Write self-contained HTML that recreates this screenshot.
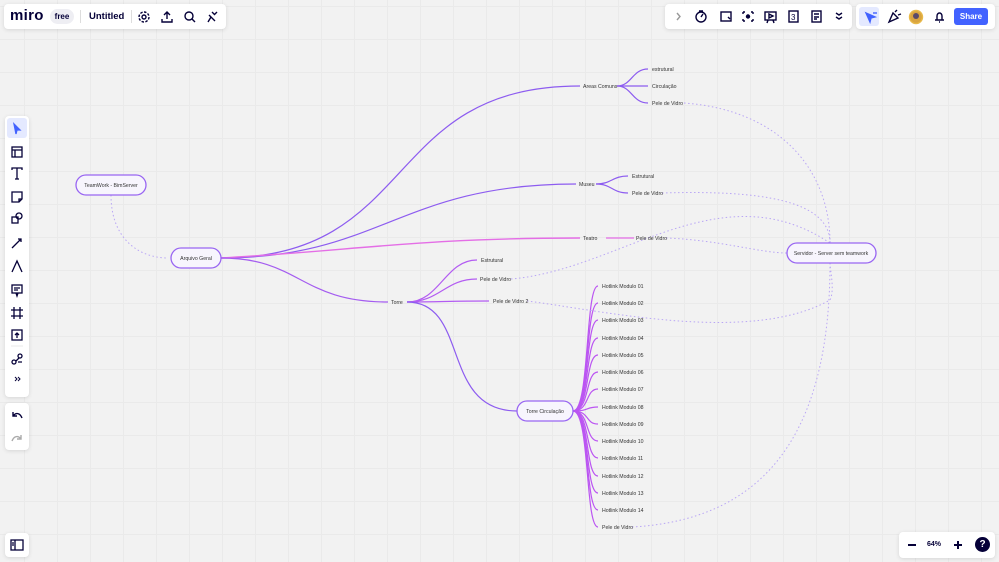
<!DOCTYPE html>
<html><head><meta charset="utf-8"><style>
*{margin:0;padding:0;box-sizing:border-box}
body{width:999px;height:562px;overflow:hidden;position:relative;font-family:"Liberation Sans",sans-serif;
background-color:#f2f2f2;
background-image:linear-gradient(#eaeaea 1px,transparent 1px),linear-gradient(90deg,#eaeaea 1px,transparent 1px);
background-size:33px 33px;background-position:24px 6px}
.panel{position:absolute;background:#fff;border-radius:4px;box-shadow:0 1px 4px rgba(0,0,0,.12)}
svg.c{position:absolute;left:0;top:0}
.ic{position:absolute}
</style></head><body>
<svg class="c" width="999" height="562" font-family="Liberation Sans, sans-serif" font-size="5.2" fill="#333">
<g fill="none" stroke-width="1.2">
<path d="M221,258 C420,258 380,86 580,86" stroke="#8d5cf0"/>
<path d="M221,258 C380,258 400,184 576,184" stroke="#8d5cf0"/>
<path d="M221,258 C360,250 420,238 580,238" stroke="#e46ee6" stroke-width="1.4"/>
<path d="M221,258 C300,258 300,302 388,302" stroke="#a45cf0"/>
<path d="M606,238 H634" stroke="#e46ee6"/>
<path d="M617,86 C632,86 632,69 648,69" stroke="#8d5cf0"/>
<path d="M617,86 H648" stroke="#8d5cf0"/>
<path d="M617,86 C632,86 632,103 648,103" stroke="#8d5cf0"/>
<path d="M596,184 C612,184 612,176 628,176" stroke="#8d5cf0"/>
<path d="M596,184 C612,184 612,193 628,193" stroke="#8d5cf0"/>
<g stroke="#b35cf2">
<path d="M407,302 C440,302 445,260 477,260"/>
<path d="M407,302 C440,302 445,279 477,279"/>
<path d="M407,302 C440,302 450,301 489,301"/>
</g>
<path d="M407,302 C470,302 440,411 517,411" stroke="#8d5cf0"/>
<g stroke="#bb55f2">
<path d="M573,411 C590,411 585,286 598,286"/>
<path d="M573,411 C590,411 585,303 598,303"/>
<path d="M573,411 C590,411 585,320 598,320"/>
<path d="M573,411 C590,411 585,338 598,338"/>
<path d="M573,411 C590,411 585,355 598,355"/>
<path d="M573,411 C590,411 585,372 598,372"/>
<path d="M573,411 C590,411 585,389 598,389"/>
<path d="M573,411 C590,411 585,407 598,407"/>
<path d="M573,411 C590,411 585,424 598,424"/>
<path d="M573,411 C590,411 585,441 598,441"/>
<path d="M573,411 C590,411 585,458 598,458"/>
<path d="M573,411 C590,411 585,476 598,476"/>
<path d="M573,411 C590,411 585,493 598,493"/>
<path d="M573,411 C590,411 585,510 598,510"/>
<path d="M573,411 C590,411 585,527 598,527"/>
</g>
<g stroke="#b9a6f5" stroke-dasharray="1.5,2.5" stroke-width="1">
<path d="M111,195 C111,240 140,258 168,258"/>
<path d="M684,103 C780,110 830,170 830,243"/>
<path d="M662,193 C760,190 830,200 830,243"/>
<path d="M666,238 C720,240 760,253 787,253"/>
<path d="M511,279 C620,270 720,170 830,243"/>
<path d="M527,301 C600,310 750,345 830,300 C835,290 830,270 830,263"/>
<path d="M632,527 C760,520 830,440 830,263"/>
</g>
<g stroke="#9966f2" stroke-width="1.3" fill="#f7f5fd">
<rect x="76" y="175" width="70" height="20" rx="10"/>
<rect x="171" y="248" width="50" height="20" rx="10"/>
<rect x="787" y="243" width="89" height="20" rx="10"/>
<rect x="517" y="401" width="56" height="20" rx="10"/>
</g>
</g>
<text x="111" y="187" text-anchor="middle">TeamWork - BimServer</text>
<text x="196" y="260" text-anchor="middle">Arquivo Geral</text>
<text x="831" y="255" text-anchor="middle">Servidor - Server sem teamwork</text>
<text x="545" y="413" text-anchor="middle">Torre Circulação</text>
<text x="583" y="88">Areas Comuns</text>
<text x="652" y="71">estrutural</text>
<text x="652" y="88">Circulação</text>
<text x="652" y="105">Pele de Vidro</text>
<text x="579" y="186">Museu</text>
<text x="632" y="178">Estrutural</text>
<text x="632" y="195">Pele de Vidro</text>
<text x="583" y="240">Teatro</text>
<text x="636" y="240">Pele de Vidro</text>
<text x="391" y="304">Torre</text>
<text x="481" y="262">Estrutural</text>
<text x="480" y="281">Pele de Vidro</text>
<text x="493" y="303">Pele de Vidro 2</text>
<g>
<text x="602" y="288">Hotlink Modulo 01</text>
<text x="602" y="305">Hotlink Modulo 02</text>
<text x="602" y="322">Hotlink Modulo 03</text>
<text x="602" y="340">Hotlink Modulo 04</text>
<text x="602" y="357">Hotlink Modulo 05</text>
<text x="602" y="374">Hotlink Modulo 06</text>
<text x="602" y="391">Hotlink Modulo 07</text>
<text x="602" y="409">Hotlink Modulo 08</text>
<text x="602" y="426">Hotlink Modulo 09</text>
<text x="602" y="443">Hotlink Modulo 10</text>
<text x="602" y="460">Hotlink Modulo 11</text>
<text x="602" y="478">Hotlink Modulo 12</text>
<text x="602" y="495">Hotlink Modulo 13</text>
<text x="602" y="512">Hotlink Modulo 14</text>
<text x="602" y="529">Pele de Vidro</text>
</g>
</svg>

<div class="panel" style="left:4px;top:4px;width:222px;height:25px">
<div style="position:absolute;left:6px;top:3px;font-size:15px;font-weight:bold;color:#050038;letter-spacing:.3px">miro</div>
<div style="position:absolute;left:46px;top:5px;width:24px;height:15px;border-radius:8px;background:#eeeef3;font-size:8px;font-weight:bold;color:#050038;text-align:center;line-height:15px">free</div>
<div style="position:absolute;left:76px;top:6px;width:1px;height:13px;background:#ddd"></div>
<div style="position:absolute;left:85px;top:7px;font-size:9.5px;font-weight:bold;color:#050038">Untitled</div>
<div style="position:absolute;left:127px;top:6px;width:1px;height:13px;background:#ddd"></div>
<svg class="ic" style="left:133px;top:6px" width="86" height="14" fill="none" stroke="#050038" stroke-width="1.4">
<circle cx="7" cy="7" r="2"/><circle cx="7" cy="7" r="5" stroke-dasharray="2.5,1.4"/>
<path d="M30,2 V9 M27,5 L30,2 L33,5 M25,9 V12 H35 V9"/>
<circle cx="52" cy="6" r="4"/><path d="M55,9 L58,12"/>
<path d="M75,2 L78,5 M72,5 L78,11 M74,7 L71,12 M80,2 L77,5"/>
</svg>
</div>

<div class="panel" style="left:665px;top:4px;width:187px;height:25px">
<svg class="ic" style="left:8px;top:5px" width="175" height="15" fill="none" stroke="#050038" stroke-width="1.4">
<path d="M4,4 L7,7.5 L4,11" stroke="#999"/>
<circle cx="28" cy="8" r="5"/><path d="M28,8 L30,5 M26,2 H30"/>
<rect x="48" y="3" width="10" height="9"/><path d="M55,8 L57,10" />
<path d="M70,3 H72 M70,3 V5 M80,3 H78 M80,3 V5 M70,12 H72 M70,12 V10 M80,12 H78 M80,12 V10"/><circle cx="75" cy="7.5" r="1.5" fill="#050038"/>
<rect x="92" y="3" width="11" height="8"/><path d="M96,5 L100,7 L96,9 Z M95,11 L94,14 M100,11 L101,14"/>
<rect x="116" y="2" width="9" height="11"/><text x="118" y="11" font-size="8" fill="#050038" stroke="none">3</text>
<rect x="139" y="2" width="9" height="11"/><path d="M141,5 H146 M141,8 H146 M141,10 H144"/>
<path d="M163,4 L166,6 L169,4 M163,8 L166,10 L169,8"/>
</svg>
</div>
<div class="panel" style="left:856px;top:4px;width:139px;height:25px">
<div style="position:absolute;left:3px;top:3px;width:20px;height:19px;background:#e4e9ff;border-radius:3px"></div>
<svg class="ic" style="left:6px;top:5px" width="130" height="16" fill="none" stroke="#050038" stroke-width="1.4">
<path d="M4,4 L8,13 L9,9 L13,8 Z" fill="#4262ff" stroke="#4262ff"/><path d="M11,4 H15" stroke="#4262ff"/>
<path d="M27,13 L31,4 L36,9 Z M33,3 L35,1 M36,6 L39,5"/>
<circle cx="54" cy="8" r="6.5" fill="#d9a440" stroke="#e8b94a"/><circle cx="54" cy="7" r="3" fill="#5a4a6a" stroke="none"/>
<path d="M73,11 H82 M75,11 V7 A2.5,3 0 0 1 80,7 V11 M77,13 H78"/>
</svg>
<div style="position:absolute;left:98px;top:4px;width:34px;height:17px;background:#4262ff;border-radius:3px;color:#fff;font-size:8px;font-weight:bold;text-align:center;line-height:17px">Share</div>
</div>

<div class="panel" style="left:5px;top:116px;width:24px;height:281px">
<div style="position:absolute;left:2px;top:2px;width:20px;height:20px;background:#e4e9ff;border-radius:3px"></div>
<svg class="ic" style="left:5px;top:5px" width="14" height="274" fill="none" stroke="#050038" stroke-width="1.3">
<path d="M4,3 L10,9 L7,9 L6,13 Z" fill="#4262ff" stroke="#4262ff"/>
<rect x="2" y="26" width="10" height="10"/><path d="M2,29 H12 M5,29 V36"/>
<path d="M2,49 V47 H12 V49 M7,47 V58 M5,58 H9"/>
<path d="M2,71 H12 V78 L9,81 H2 Z M9,81 V78 H12"/>
<circle cx="9" cy="95" r="3"/><rect x="2" y="96" width="6" height="6"/>
<path d="M2,127 L11,118 M8,118 H11 V121"/>
<path d="M2,151 L7,140 L12,151"/>
<rect x="2" y="164" width="10" height="8"/><path d="M4,167 H10 M4,169 H8 M6,172 L7,175 L8,172"/>
<path d="M4,186 V198 M10,186 V198 M1,189 H13 M1,195 H13"/>
<rect x="2" y="209" width="10" height="10"/><path d="M7,217 V212 M5,214 L7,212 L9,214"/>
<path d="M1,225 H13" stroke="#eee"/>
<circle cx="4" cy="241" r="2"/><circle cx="10" cy="235" r="2"/><path d="M6,240 L9,237 M8,241 H12"/>
<path d="M5,256 L7,258 L5,260 M8,256 L10,258 L8,260" stroke-width="1"/>
</svg>
</div>
<div class="panel" style="left:5px;top:403px;width:24px;height:47px">
<svg class="ic" style="left:5px;top:6px" width="14" height="36" fill="none" stroke-width="1.4">
<path d="M3,3 V7 H7 M3,7 C6,3 10,4 12,9" stroke="#050038"/>
<path d="M11,26 V30 H7 M11,30 C8,26 4,27 2,32" stroke="#aaa"/>
</svg>
</div>

<div class="panel" style="left:5px;top:533px;width:24px;height:24px">
<svg class="ic" style="left:5px;top:6px" width="14" height="12" fill="none" stroke="#050038" stroke-width="1.3"><rect x="1" y="1" width="12" height="10"/><path d="M5,1 V11 M2,4 H4 M2,6 H4"/></svg>
</div>
<div class="panel" style="left:899px;top:532px;width:96px;height:26px">
<div style="position:absolute;left:9px;top:12px;width:8px;height:1.6px;background:#050038"></div>
<div style="position:absolute;left:28px;top:9px;font-size:7px;font-weight:bold;color:#050038">64%</div>
<div style="position:absolute;left:55px;top:12px;width:8px;height:1.6px;background:#050038"></div>
<div style="position:absolute;left:58.2px;top:9px;width:1.6px;height:8px;background:#050038"></div>
<div style="position:absolute;left:76px;top:5px;width:15px;height:15px;border-radius:50%;background:#050038;color:#fff;font-size:10px;font-weight:bold;text-align:center;line-height:15px">?</div>
</div>
</body></html>
